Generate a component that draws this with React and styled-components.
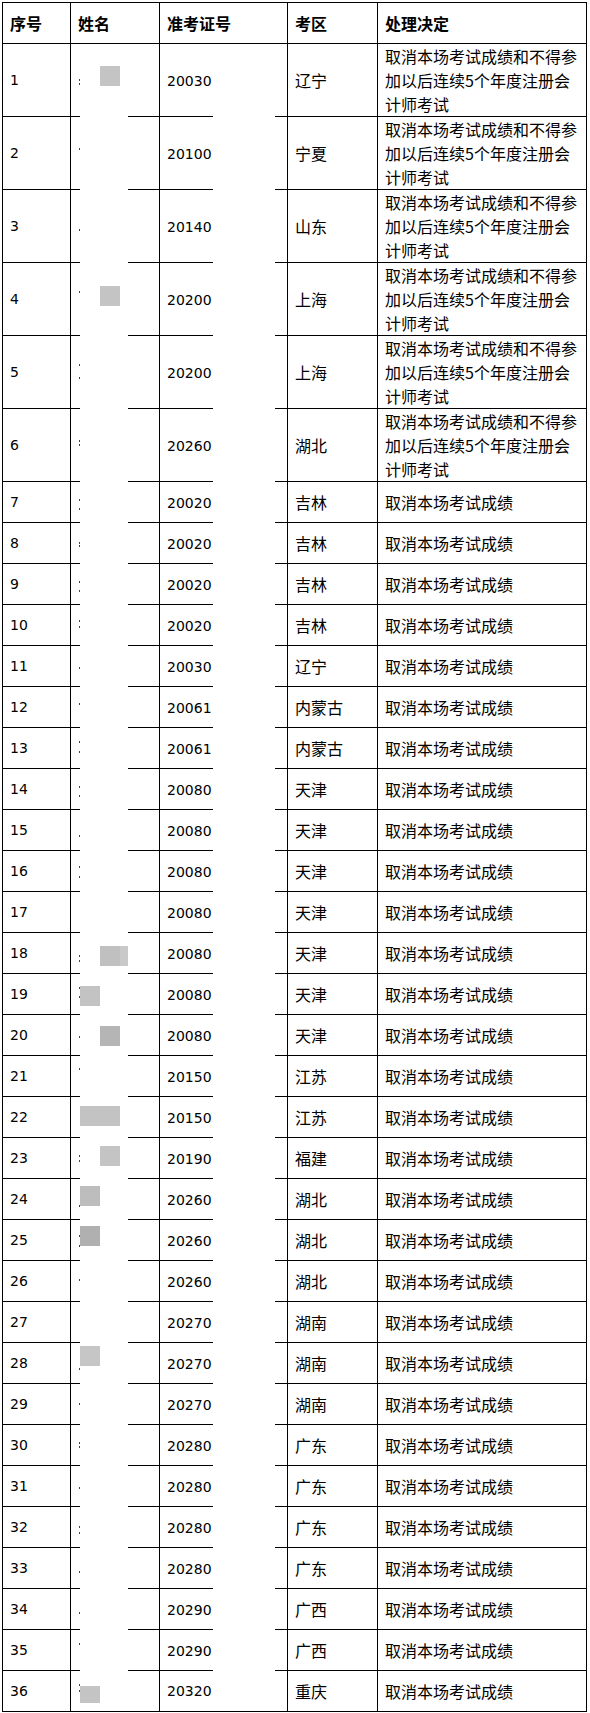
import React from "react";
import styled, { createGlobalStyle, css } from "styled-components";

const Global = createGlobalStyle`
  html, body { margin: 0; padding: 0; background: #fff; }
  body { font-family: "Noto Sans CJK SC", "Noto Sans", sans-serif; color: #000; }
`;

const COLS = "68px 89px 128px 90px 209px";

const Table = styled.div`
  margin: 2px 0 0 2px;
  width: 585px;
  box-sizing: border-box;
  border-left: 1px solid #000;
  border-top: 1px solid #000;
`;

const Row = styled.div`
  display: grid;
  grid-template-columns: ${COLS};
  height: ${(p) => p.$h}px;
`;

const Cell = styled.div`
  position: relative;
  box-sizing: border-box;
  display: flex;
  align-items: center;
  padding: 0 7px;
  border-right: 1px solid #000;
  font-size: 16px;
  line-height: 24px;
  white-space: nowrap;
  ${(p) =>
    p.$gap
      ? css`
          background: linear-gradient(
              to right,
              #000 0 ${p.$gap[0]}px,
              transparent ${p.$gap[0]}px ${p.$gap[1]}px,
              #000 ${p.$gap[1]}px 100%
            )
            bottom / 100% 1px no-repeat;
        `
      : css`
          border-bottom: 1px solid #000;
        `}
`;

const HeadCell = styled(Cell)`
  font-weight: 700;
`;

const Num = styled.span`
  font-family: "DejaVu Sans", Verdana, sans-serif;
  font-size: 14px;
`;

const Lines = styled.div`
  display: flex;
  flex-direction: column;
`;

const Line = styled.span`
  display: block;
  line-height: 24px;
`;

const Mosaic = styled.span`
  position: absolute;
  left: ${(p) => p.$x - 71}px;
  top: ${(p) => p.$y}px;
  width: ${(p) => p.$w}px;
  height: ${(p) => p.$hh || 20}px;
  background: ${(p) => p.$c || "#c4c4c4"};
`;

const Speck = styled.span`
  position: absolute;
  left: 8px;
  top: ${(p) => p.$y}px;
  width: 1px;
  height: 2px;
  background: #444;
`;

const LONG = ["取消本场考试成绩和不得参", "加以后连续5个年度注册会", "计师考试"];
const SHORT = "取消本场考试成绩";

const data = [
  ["1", "20030", "辽宁", true, [36, 40], [{ x: 100, y: 22, w: 20 }]],
  ["2", "20100", "宁夏", true, [32], []],
  ["3", "20140", "山东", true, [40], []],
  ["4", "20200", "上海", true, [29], [{ x: 100, y: 23, w: 20 }]],
  ["5", "20200", "上海", true, [29, 42], []],
  ["6", "20260", "湖北", true, [32, 36], []],
  ["7", "20020", "吉林", false, [18, 27], []],
  ["8", "20020", "吉林", false, [20, 23], []],
  ["9", "20020", "吉林", false, [18, 27], []],
  ["10", "20020", "吉林", false, [16, 22], []],
  ["11", "20030", "辽宁", false, [22], []],
  ["12", "20061", "内蒙古", false, [17], []],
  ["13", "20061", "内蒙古", false, [14, 24], []],
  ["14", "20080", "天津", false, [18, 27], []],
  ["15", "20080", "天津", false, [26], []],
  ["16", "20080", "天津", false, [16, 26], []],
  ["17", "20080", "天津", false, [], []],
  ["18", "20080", "天津", false, [23, 28], [
    { x: 100, y: 13, w: 20, c: "#c0c0c0" },
    { x: 120, y: 13, w: 8, c: "#c9c9c9" },
  ]],
  ["19", "20080", "天津", false, [14, 23], [{ x: 80, y: 12, w: 20, c: "#c3c3c3" }]],
  ["20", "20080", "天津", false, [22], [{ x: 100, y: 11, w: 20, c: "#b5b5b5" }]],
  ["21", "20150", "江苏", false, [13], []],
  ["22", "20150", "江苏", false, [], [{ x: 80, y: 9, w: 40, c: "#c3c3c3" }]],
  ["23", "20190", "福建", false, [18, 23], [{ x: 100, y: 8, w: 20 }]],
  ["24", "20260", "湖北", false, [27], [{ x: 80, y: 7, w: 20, c: "#bdbdbd" }]],
  ["25", "20260", "湖北", false, [16, 26], [{ x: 80, y: 6, w: 20, c: "#b0b0b0" }]],
  ["26", "20260", "湖北", false, [19], []],
  ["27", "20270", "湖南", false, [], []],
  ["28", "20270", "湖南", false, [26], [{ x: 80, y: 3, w: 20, c: "#c6c6c6" }]],
  ["29", "20270", "湖南", false, [20], []],
  ["30", "20280", "广东", false, [18, 22], []],
  ["31", "20280", "广东", false, [22], []],
  ["32", "20280", "广东", false, [20, 26], []],
  ["33", "20280", "广东", false, [24], []],
  ["34", "20290", "广西", false, [24], []],
  ["35", "20290", "广西", false, [14], []],
  ["36", "20320", "重庆", false, [14, 20], [{ x: 80, y: 15, w: 20, hh: 17, c: "#c4c4c4" }]],
];

const NAME_GAP = [9, 57];
const ID_GAP = [53, 115];

export default function App() {
  return (
    <>
      <Global />
      <Table>
        <Row $h={41}>
          <HeadCell>序号</HeadCell>
          <HeadCell>姓名</HeadCell>
          <HeadCell>准考证号</HeadCell>
          <HeadCell>考区</HeadCell>
          <HeadCell>处理决定</HeadCell>
        </Row>
        {data.map(([n, id, area, tall, specks, blocks], i) => {
          const last = i === data.length - 1;
          return (
            <Row key={n} $h={tall ? 73 : 41}>
              <Cell>
                <Num>{n}</Num>
              </Cell>
              <Cell $gap={last ? null : NAME_GAP}>
                {specks.map((y) => (
                  <Speck key={y} $y={y - 1} />
                ))}
                {blocks.map((b, k) => (
                  <Mosaic key={k} $x={b.x} $y={b.y} $w={b.w} $hh={b.hh} $c={b.c} />
                ))}
              </Cell>
              <Cell $gap={last ? null : ID_GAP}>
                <Num>{id}</Num>
              </Cell>
              <Cell>{area}</Cell>
              <Cell>
                {tall ? (
                  <Lines>
                    {LONG.map((l) => (
                      <Line key={l}>{l}</Line>
                    ))}
                  </Lines>
                ) : (
                  SHORT
                )}
              </Cell>
            </Row>
          );
        })}
      </Table>
    </>
  );
}
